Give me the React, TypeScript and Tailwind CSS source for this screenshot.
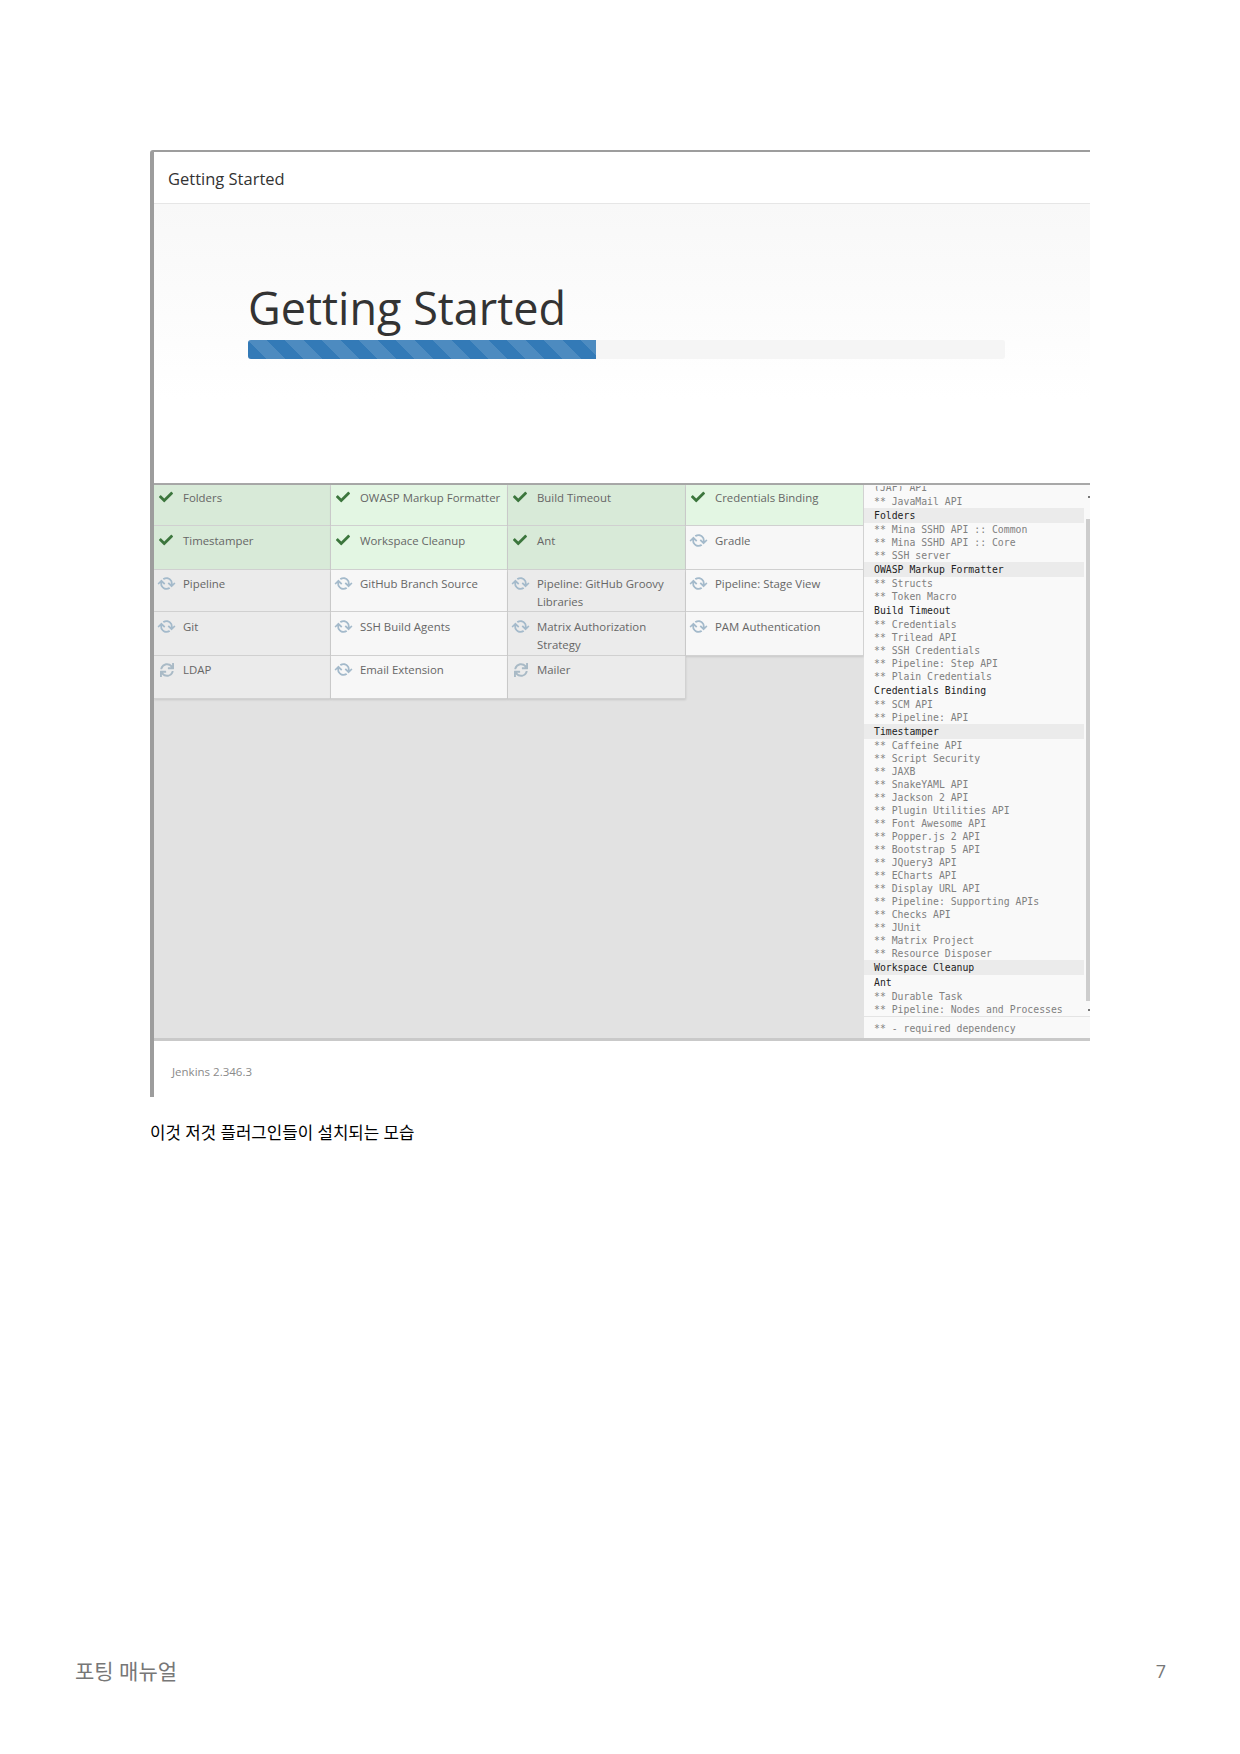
import React from 'react';
import { FaCheck, FaSync } from 'react-icons/fa';

type Status = 'done' | 'spin' | 'wait';

interface Plugin {
  name: string;
  status: Status;
  pad: string;
}

const plugins: Plugin[] = [
  { name: 'Folders', status: 'done', pad: 'pt-[4px]' },
  { name: 'OWASP Markup Formatter', status: 'done', pad: 'pt-[4px]' },
  { name: 'Build Timeout', status: 'done', pad: 'pt-[4px]' },
  { name: 'Credentials Binding', status: 'done', pad: 'pt-[4px]' },
  { name: 'Timestamper', status: 'done', pad: 'pt-[6px]' },
  { name: 'Workspace Cleanup', status: 'done', pad: 'pt-[6px]' },
  { name: 'Ant', status: 'done', pad: 'pt-[6px]' },
  { name: 'Gradle', status: 'spin', pad: 'pt-[6px]' },
  { name: 'Pipeline', status: 'spin', pad: 'pt-[5px]' },
  { name: 'GitHub Branch Source', status: 'spin', pad: 'pt-[5px]' },
  { name: 'Pipeline: GitHub Groovy Libraries', status: 'spin', pad: 'pt-[5px]' },
  { name: 'Pipeline: Stage View', status: 'spin', pad: 'pt-[5px]' },
  { name: 'Git', status: 'spin', pad: 'pt-[6px]' },
  { name: 'SSH Build Agents', status: 'spin', pad: 'pt-[6px]' },
  { name: 'Matrix Authorization Strategy', status: 'spin', pad: 'pt-[6px]' },
  { name: 'PAM Authentication', status: 'spin', pad: 'pt-[6px]' },
  { name: 'LDAP', status: 'wait', pad: 'pt-[5px]' },
  { name: 'Email Extension', status: 'spin', pad: 'pt-[5px]' },
  { name: 'Mailer', status: 'wait', pad: 'pt-[5px]' },
];

const logLines: { text: string; head?: boolean; shade?: boolean }[] = [
  { text: '** JavaMail API' },
  { text: 'Folders', head: true, shade: true },
  { text: '** Mina SSHD API :: Common' },
  { text: '** Mina SSHD API :: Core' },
  { text: '** SSH server' },
  { text: 'OWASP Markup Formatter', head: true, shade: true },
  { text: '** Structs' },
  { text: '** Token Macro' },
  { text: 'Build Timeout', head: true },
  { text: '** Credentials' },
  { text: '** Trilead API' },
  { text: '** SSH Credentials' },
  { text: '** Pipeline: Step API' },
  { text: '** Plain Credentials' },
  { text: 'Credentials Binding', head: true },
  { text: '** SCM API' },
  { text: '** Pipeline: API' },
  { text: 'Timestamper', head: true, shade: true },
  { text: '** Caffeine API' },
  { text: '** Script Security' },
  { text: '** JAXB' },
  { text: '** SnakeYAML API' },
  { text: '** Jackson 2 API' },
  { text: '** Plugin Utilities API' },
  { text: '** Font Awesome API' },
  { text: '** Popper.js 2 API' },
  { text: '** Bootstrap 5 API' },
  { text: '** JQuery3 API' },
  { text: '** ECharts API' },
  { text: '** Display URL API' },
  { text: '** Pipeline: Supporting APIs' },
  { text: '** Checks API' },
  { text: '** JUnit' },
  { text: '** Matrix Project' },
  { text: '** Resource Disposer' },
  { text: 'Workspace Cleanup', head: true, shade: true },
  { text: 'Ant', head: true },
  { text: '** Durable Task' },
  { text: '** Pipeline: Nodes and Processes' },
];

const PluginCell: React.FC<{ plugin: Plugin; index: number }> = ({ plugin, index }) => {
  const oddColumn = index % 4 === 0 || index % 4 === 2;
  const isDone = plugin.status === 'done';
  let bg = oddColumn ? 'bg-[#ebebeb]' : 'bg-[#f7f7f7]';
  if (isDone) bg = oddColumn ? 'bg-[#d8ead8]' : 'bg-[#e3f6e3]';

  return (
    <div className={`flex border-r border-b border-[#d2d2d2] shadow-[0_1px_2px_rgba(0,0,0,0.12)] pl-[4px] pr-1 ${plugin.pad} ${bg}`}>
      <div className="w-[25px] shrink-0 h-[18px] flex items-center">
        {isDone && <FaCheck className="w-[14px] h-[14px] ml-[1px] -mt-[3px] text-[#3c763d]" />}
        {plugin.status === 'spin' && (
          <FaSync className="w-[13px] h-[13px] ml-[2px] -mt-[1px] rotate-[45deg] text-[#a4bacb]" />
        )}
        {plugin.status === 'wait' && (
          <FaSync className="w-[14px] h-[14px] ml-[2px] -mt-[1px] text-[#a9bac6]" />
        )}
      </div>
      <div className="text-[11.4px] leading-[18px] text-[#666666]">{plugin.name}</div>
    </div>
  );
};

export default function App() {
  return (
    <div className="w-[1240px] h-[1754px] bg-white flex flex-col font-['Open_Sans','Noto_Sans_CJK_KR',sans-serif]">
      <div className="pl-[150px] pt-[150px]">
        <div className="w-[940px] h-[947px] flex flex-col border-l-4 border-t-2 border-[#9d9d9d] rounded-tl-[3px] overflow-hidden">
          {/* window title */}
          <div className="h-[52px] shrink-0 flex items-center pl-[14px] pt-[3px] border-b border-[#e6e6e6] text-[16.5px] font-medium text-[#333333]">
            Getting Started
          </div>

          {/* progress header */}
          <div className="h-[279px] shrink-0 bg-gradient-to-b from-[#f8f8f8] to-white to-[70%] pl-[94px] pt-[76px]">
            <div className="text-[45px] leading-[56px] text-[#333333] font-medium">Getting Started</div>
            <div className="mt-[4px] w-[757px] h-[19px] rounded-[3px] bg-[#f5f5f5] overflow-hidden">
              <div className="w-[348px] h-full bg-[#337ab7] bg-[linear-gradient(45deg,rgba(255,255,255,.13)_25%,transparent_25%,transparent_50%,rgba(255,255,255,.13)_50%,rgba(255,255,255,.13)_75%,transparent_75%,transparent)] bg-[length:37px_37px]" />
            </div>
          </div>

          {/* plugin grid and log */}
          <div className="h-[558px] shrink-0 flex border-t-2 border-b-[3px] border-t-[#a8a8a8] border-b-[#c9c9c9] bg-[#e2e2e2]">
            <div className="w-[710px] shrink-0">
              <div className="grid grid-cols-[177px_177px_178px_178px] grid-rows-[41px_44px_42px_44px_43px]">
                {plugins.map((plugin, i) => (
                  <PluginCell key={plugin.name} plugin={plugin} index={i} />
                ))}
              </div>
            </div>

            <div className="flex-1 min-w-0 flex flex-col bg-[#f9f9f9] font-['DejaVu_Sans_Mono',monospace] text-[9.8px]">
              <div className="relative flex-1 min-h-0 overflow-hidden border-b border-[#e4e4e4]">
                <div className="overflow-hidden h-[5px] mt-[1px] pl-[10px] leading-[6px] text-[#808080]">
                  <div className="-mt-[1px]">(JAF) API</div>
                </div>
                <div className="pr-[6px] mt-[4px]">
                  {logLines.map((line, i) =>
                    line.head ? (
                      <div
                        key={i}
                        className={`h-[15px] leading-[15px] pl-[10px] text-[#222222] ${line.shade ? 'bg-[#ebebeb]' : ''}`}
                      >
                        {line.text}
                      </div>
                    ) : (
                      <div key={i} className="h-[13px] leading-[13px] pl-[10px] text-[#808080]">
                        {line.text}
                      </div>
                    ),
                  )}
                </div>
                {/* scrollbar */}
                <div className="absolute right-0 top-[34px] w-[4px] h-[482px] bg-[#cdcdcd]" />
                <div className="absolute right-0 top-[11px] w-[2px] h-[2px] bg-[#777777]" />
                <div className="absolute right-0 top-[524px] w-[2px] h-[2px] bg-[#777777]" />
              </div>
              <div className="h-[21px] shrink-0 leading-[23px] pl-[10px] text-[#808080]">** - required dependency</div>
            </div>
          </div>

          {/* version */}
          <div className="flex-1 pl-[18px] pt-[22px] text-[11.5px] leading-[18px] text-[#8a8a8a]">Jenkins 2.346.3</div>
        </div>

        <div className="mt-[25px] text-[16.8px] leading-[22px] text-black">이것 저것 플러그인들이 설치되는 모습</div>
      </div>

      <div className="mt-auto flex justify-between pl-[75px] pr-[74px] pb-[68px] text-[21px] leading-[30px] text-[#777777]">
        <span>포팅 매뉴얼</span>
        <span className="text-[18px]">7</span>
      </div>
    </div>
  );
}
